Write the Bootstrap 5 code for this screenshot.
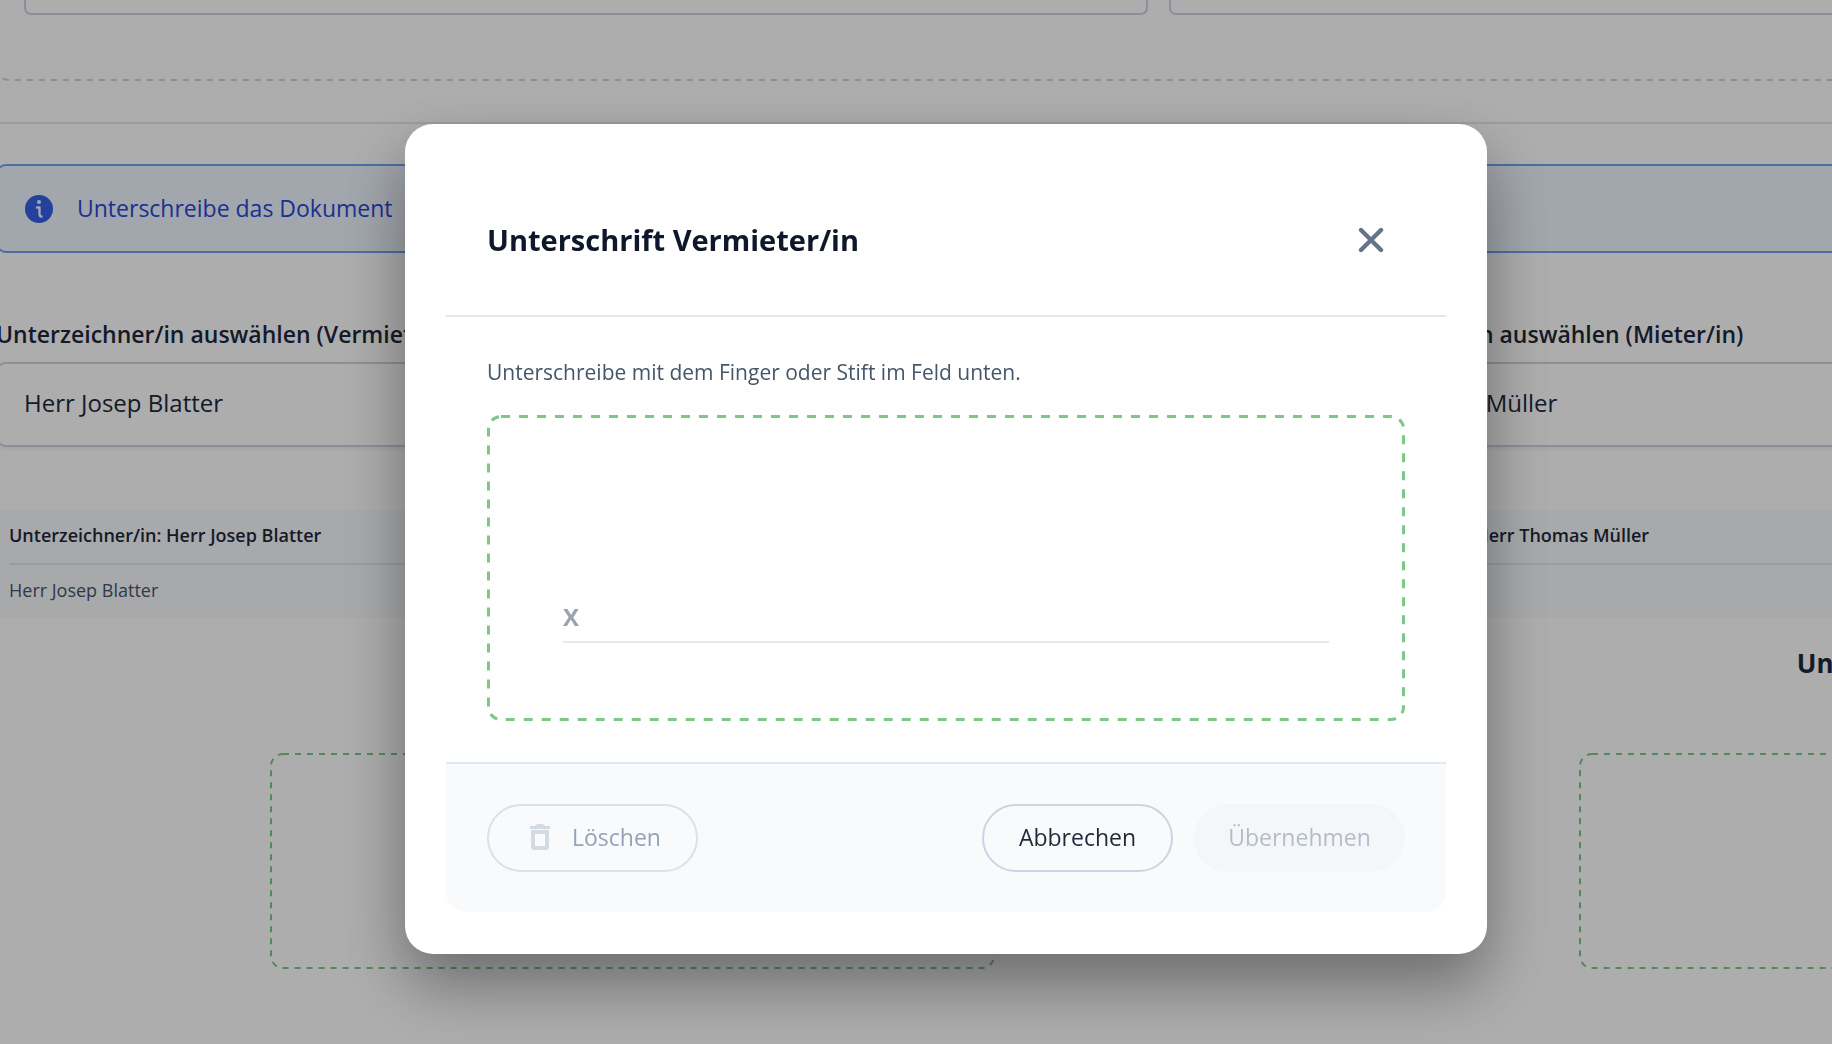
<!DOCTYPE html>
<html lang="de">
<head>
<meta charset="utf-8">
<meta name="viewport" content="width=device-width, initial-scale=1">
<title>Unterschrift Vermieter/in</title>
<link href="https://cdn.jsdelivr.net/npm/bootstrap@5.3.0/dist/css/bootstrap.min.css" rel="stylesheet">
<style>
  :root { --ink: #1e293b; --line: #cbd5e1; --soft: #e2e8f0; --green: #7bc888; --tint: #f8fafc; }
  body { font-family: "Open Sans", "Noto Sans", sans-serif; font-size: 24px; line-height: 32px; color: var(--ink); overflow: hidden; }

  /* dashed frames: evenly spaced dashes, drawn by an svg behind the content */
  .dashed { position: relative; overflow: hidden; }
  .dashed > .frame { position: absolute; inset: 0; width: 100%; height: 100%; pointer-events: none; }
  .frame rect { fill: none; stroke: var(--green); stroke-width: 2px; stroke-dasharray: 6 6; x: 1px; y: 1px; width: calc(100% - 2px); height: calc(100% - 2px); rx: 12px; }
  /* stroke is drawn at double width and its outer half is clipped by the frame */
  .frame-thick rect { stroke-width: 6px; stroke-dasharray: 9 9; x: 0; y: 0; width: 100%; height: 100%; rx: 14px; }
  .frame-open rect { stroke: var(--line); y: -40px; height: calc(100% + 39px); }

  /* document page behind the dialog, wider than the window */
  .sheet { width: calc(141vw - 2px); margin-left: -4px; }
  .upload-zone { padding: 0 28px 66px; gap: 21px; }
  .field-end { width: 1124px; height: 15px; border: 2px solid var(--line); border-top: 0; border-radius: 0 0 7px 7px; }
  .divider { border-top: 2px solid var(--soft); margin: 41px 0 40px; }
  .info-box { height: 89px; border: 2px solid #6ea4f5; border-radius: 10px; background: #eff6ff; color: #2948d5; padding: 0 27px; gap: 24px; font-size: 23px; margin-bottom: 65px; }
  .info-box span { padding-bottom: 2px; }
  .columns { gap: 37px; }
  .column-half { flex: 1 1 0; min-width: 0; }
  .field-label { font-size: 23px; font-weight: 600; line-height: 32px; margin-bottom: 12px; }
  .signer { appearance: none; height: 85px; border: 2px solid var(--line); border-radius: 10px; padding: 0 26px 4px; font-size: 24px; color: var(--ink); background: #fff; box-shadow: 0 2px 4px rgba(0, 0, 0, .06); margin-bottom: 63px; }
  .facts { font-size: 18px; line-height: 24px; background: var(--tint); border-collapse: separate; border-spacing: 13px 0; }
  .facts th, .facts td { text-align: left; padding: 13px 0 16px; }
  .facts th { font-weight: 600; border-bottom: 2px solid var(--soft); }
  .facts td { color: #475569; }
  .party { font-size: 26px; font-weight: 700; line-height: 32px; margin: 29px 0 74px; }
  .mini-pad { width: 57%; height: 216px; }

  /* dialog */
  .dim { background: rgba(0, 0, 0, .32); padding: 34px 0 0 60px; }
  .dim .modal-dialog { max-width: 1082px; }
  .sheet-dialog { border: 0; border-radius: 28px; padding: 41px 41px 42px; box-shadow: 0 30px 64px rgba(0, 0, 0, .38); }
  .sheet-dialog .modal-header { padding: 41px; border-bottom: 2px solid var(--soft); border-radius: 0; }
  .sheet-dialog .modal-title { font-size: 29px; font-weight: 700; line-height: 40px; color: #0f172a; }
  .close-x { width: 68px; height: 68px; color: #64748b; }
  .sheet-dialog .modal-body { padding: 41px; }
  .hint { font-size: 21px; line-height: 29px; color: #475569; margin-bottom: 28px; }
  .pad { height: 306px; padding: 0 76px 78px; border-radius: 14px; }
  .pad-line { border-bottom: 2px solid #e5e7eb; color: #9ca3af; font-size: 24px; font-weight: 700; line-height: 32px; padding-bottom: 8px; }
  .sheet-dialog .modal-footer { padding: 40px 41px; border-top: 2px solid var(--soft); border-radius: 0 0 20px 20px; background: var(--tint); }
  .sheet-dialog .modal-footer > * { margin: 0; }
  .actions { gap: 21px; }
  .pill { --bs-btn-padding-x: 30px; --bs-btn-border-width: 2px; --bs-btn-font-size: 23px; --bs-btn-line-height: 32px; --bs-btn-border-radius: 34px; --bs-btn-disabled-opacity: 1; height: 68px; min-width: 191px; padding-bottom: 8px; }
  .pill-wide { min-width: 211px; }
  .pill-icon { gap: 14px; }
  .pill-outline { --bs-btn-color: var(--ink); --bs-btn-border-color: var(--line); --bs-btn-hover-border-color: var(--line); --bs-btn-disabled-color: #94a3b8; --bs-btn-disabled-border-color: #dae1e9; }
  .pill-solid { --bs-btn-disabled-color: #b4bdcd; --bs-btn-disabled-bg: #f4f6f8; --bs-btn-disabled-border-color: #f4f6f8; }
</style>
<script src="https://cdn.jsdelivr.net/npm/bootstrap@5.3.0/dist/js/bootstrap.bundle.min.js" defer></script>
</head>
<body>
<main class="sheet">
  <div class="upload-zone dashed d-flex">
    <svg class="frame frame-open" aria-hidden="true"><rect/></svg>
    <div class="field-end"></div>
    <div class="field-end"></div>
  </div>
  <div class="divider"></div>
  <div class="info-box d-flex align-items-center">
    <svg width="28" height="28" viewBox="0 0 28 28" aria-hidden="true"><circle cx="14" cy="14" r="14" fill="#3560e8"/><circle cx="14" cy="7" r="2" fill="#eff6ff"/><path d="M12 12.500h2.500v6.500q0 2.500 2 2.500" fill="none" stroke="#eff6ff" stroke-width="2.400" stroke-linecap="round" stroke-linejoin="round"/></svg>
    <span>Unterschreibe das Dokument</span>
  </div>
  <div class="columns d-flex">
    <section class="column-half">
      <label class="field-label d-block" for="signer-a">Unterzeichner/in auswählen (Vermieter/in)</label>
      <select class="signer w-100" id="signer-a"><option>Herr Josep Blatter</option></select>
      <table class="facts w-100">
        <tr><th>Unterzeichner/in: Herr Josep Blatter</th></tr>
        <tr><td>Herr Josep Blatter</td></tr>
      </table>
      <h2 class="party text-center">Unterschrift Vermieter/in</h2>
      <div class="mini-pad dashed mx-auto"><svg class="frame" aria-hidden="true"><rect/></svg></div>
    </section>
    <section class="column-half">
      <label class="field-label d-block" for="signer-b">Unterzeichner/in auswählen (Mieter/in)</label>
      <select class="signer w-100" id="signer-b"><option>Herr Thomas Müller</option></select>
      <table class="facts w-100">
        <tr><th>Unterzeichner/in: Herr Thomas Müller</th></tr>
        <tr><td>Herr Thomas Müller</td></tr>
      </table>
      <h2 class="party text-center">Unterschrift Mieter/in</h2>
      <div class="mini-pad dashed mx-auto"><svg class="frame" aria-hidden="true"><rect/></svg></div>
    </section>
  </div>
</main>

<div class="modal dim d-block" tabindex="-1" role="dialog" aria-modal="true" aria-labelledby="dialog-title">
  <div class="modal-dialog modal-dialog-centered my-0 h-100">
    <div class="modal-content sheet-dialog">
      <div class="modal-header justify-content-between">
        <h1 class="modal-title" id="dialog-title">Unterschrift Vermieter/in</h1>
        <button type="button" class="close-x btn border-0 p-0" aria-label="Schließen">
          <svg width="26" height="26" viewBox="0 0 26 26" fill="none" stroke="currentColor" stroke-width="4.400" stroke-linecap="round" aria-hidden="true"><path d="M3 3l20 20M23 3l-20 20"/></svg>
        </button>
      </div>
      <div class="modal-body">
        <p class="hint">Unterschreibe mit dem Finger oder Stift im Feld unten.</p>
        <div class="pad dashed d-flex flex-column justify-content-end">
          <svg class="frame frame-thick" aria-hidden="true"><rect/></svg>
          <div class="pad-line">X</div>
        </div>
      </div>
      <div class="modal-footer justify-content-between">
        <button type="button" class="btn pill pill-wide pill-icon pill-outline d-flex align-items-center justify-content-center" disabled>
          <svg width="34" height="34" viewBox="1 0 34 34" aria-hidden="true" fill="#d3dae2"><path d="M7 6h5q1-2 3-2h4q2 0 3 2h5v3H7z"/><path fill-rule="evenodd" d="M8 10h18v17q0 3-3 3H11q-3 0-3-3zM12 14v12h10V14z"/></svg>
          Löschen
        </button>
        <div class="actions d-flex">
          <button type="button" class="btn pill pill-outline">Abbrechen</button>
          <button type="button" class="btn pill pill-wide pill-solid" disabled>Übernehmen</button>
        </div>
      </div>
    </div>
  </div>
</div>
</body>
</html>
